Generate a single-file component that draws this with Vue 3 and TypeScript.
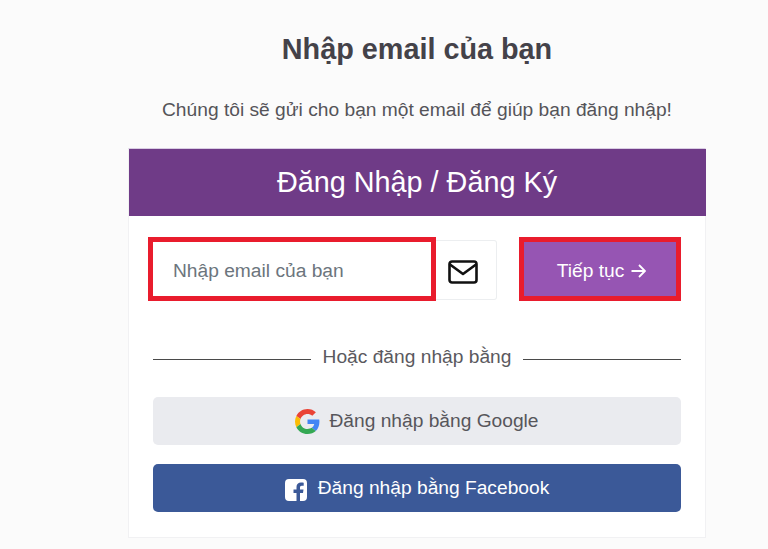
<script setup lang="ts">
const heading: string = 'Nhập email của bạn'
</script>

<template>
  <main class="page">
    <h1 class="title">{{ heading }}</h1>
    <p class="sub">Chúng tôi sẽ gửi cho bạn một email để giúp bạn đăng nhập!</p>
    <section class="card">
      <header class="head">Đăng Nhập / Đăng Ký</header>
      <div class="body">
        <form class="row" @submit.prevent>
          <div class="group">
            <input class="email" type="text" placeholder="Nhập email của bạn" />
            <span class="addon">
              <svg width="30" height="24" viewBox="0 0 30 24" fill="none" stroke="#111" stroke-width="2.600" stroke-linejoin="round">
                <rect x="1.500" y="1.500" width="27" height="21" rx="2.500" />
                <path d="M2 4.500l13 9.500L28 4.500" />
              </svg>
            </span>
          </div>
          <button class="next" type="submit">
            <span>Tiếp tục</span>
            <svg width="15" height="14" viewBox="0 0 15 14" fill="none" stroke="#fff" stroke-width="1.800">
              <path d="M0.500 7H14M8 1l6 6-6 6" />
            </svg>
          </button>
        </form>
        <div class="divider">
          <span class="line"></span>
          <span class="or">Hoặc đăng nhập bằng</span>
          <span class="line"></span>
        </div>
        <button class="social google" type="button">
          <svg width="25" height="25" viewBox="0 0 48 48">
            <path fill="#EA4335" d="M24 9.500c3.500 0 6.700 1.200 9.200 3.600l6.900-6.900C35.900 2.400 30.500 0 24 0 14.600 0 6.500 5.400 2.600 13.200l8 6.200C12.500 13.700 17.800 9.500 24 9.500z" />
            <path fill="#4285F4" d="M46.900 24.500c0-1.600-.1-3.100-.4-4.500H24v9h12.900c-.6 3-2.200 5.500-4.700 7.200l7.700 6c4.500-4.200 7-10.300 7-17.700z" />
            <path fill="#FBBC05" d="M10.500 28.600c-.5-1.500-.8-3-.8-4.600s.3-3.100.8-4.600l-8-6.200C.9 16.500 0 20.100 0 24s.9 7.500 2.600 10.800l7.900-6.200z" />
            <path fill="#34A853" d="M24 48c6.500 0 11.900-2.100 15.900-5.800l-7.700-6c-2.200 1.400-4.900 2.300-8.200 2.300-6.200 0-11.500-4.200-13.400-9.900l-8 6.200C6.500 42.600 14.600 48 24 48z" />
          </svg>
          <span>Đăng nhập bằng Google</span>
        </button>
        <button class="social facebook" type="button">
          <svg class="fb-icon" width="22" height="22" viewBox="0 0 22 22">
            <path fill="#fff" d="M4 0h14a4 4 0 0 1 4 4v14a4 4 0 0 1-4 4h-3v-8h3l.5-3.500H15V8.500c0-1 .5-1.700 1.800-1.700h1.900V3.700c-.6-.1-1.600-.2-2.700-.2-2.700 0-4.500 1.600-4.500 4.600v2.400H8.500V14h3v8H4a4 4 0 0 1-4-4V4a4 4 0 0 1 4-4z" />
          </svg>
          <span class="fb-text">Đăng nhập bằng Facebook</span>
        </button>
      </div>
    </section>
  </main>
</template>

<style scoped>
.page {
  width: 578px;
  margin-left: 128px;
  height: 549px;
  overflow: hidden;
  font-family: "Liberation Sans", Arial, sans-serif;
  color: #4a4a4f;
}
.title {
  margin: 0;
  padding-top: 31px;
  font-size: 28.800px;
  line-height: 36px;
  font-weight: 700;
  text-align: center;
  color: #444249;
}
.sub {
  margin: 0;
  padding-top: 30px;
  font-size: 19.200px;
  line-height: 26px;
  text-align: center;
  color: #555459;
}
.card {
  margin-top: 25px;
  height: 390px;
  box-sizing: border-box;
  background: #fff;
  border: 1px solid #f1f1f3;
  border-top-color: #d9cde3;
}
.head {
  height: 67px;
  margin: 0 -0.500px;
  background: #6f3b87;
  color: #fff;
  font-size: 28.800px;
  line-height: 66px;
  text-align: center;
}
.body {
  padding: 21px 24px 0;
}
.row {
  display: flex;
  align-items: center;
  justify-content: space-between;
  margin-left: -5px;
}
.group {
  display: flex;
  align-items: flex-end;
}
.email {
  width: 288px;
  height: 64px;
  box-sizing: border-box;
  padding: 3px 20px 0;
  border: 5px solid #e91c2d;
  outline: none;
  background: #fff;
  font: 19.200px "Liberation Sans", Arial, sans-serif;
  color: #495057;
}
.email::placeholder {
  color: #6c757d;
  opacity: 1;
}
.addon {
  display: flex;
  align-items: center;
  justify-content: center;
  width: 61px;
  height: 60px;
  box-sizing: border-box;
  margin-bottom: 1px;
  padding: 4px 7px 0 0;
  border: 1px solid #eceef0;
  border-left: none;
  border-radius: 0 3px 3px 0;
  background: #fff;
}
.next {
  display: flex;
  align-items: center;
  justify-content: center;
  gap: 7px;
  width: 162px;
  height: 64px;
  box-sizing: border-box;
  padding: 3px 0 0 3px;
  border: 5px solid #e91c2d;
  background: #9655b3;
  color: #fff;
  font: 19.200px "Liberation Sans", Arial, sans-serif;
}
.divider {
  display: flex;
  align-items: center;
  gap: 12px;
  margin-top: 45px;
  height: 26px;
}
.line {
  flex: 1;
  height: 1px;
  background: #4a4a4a;
}
.or {
  font-size: 19.200px;
  color: #5a595e;
  transform: translateY(-2px);
}
.social {
  display: flex;
  align-items: center;
  justify-content: center;
  gap: 9px;
  width: 100%;
  height: 48px;
  border: none;
  border-radius: 5px;
  font: 19.200px "Liberation Sans", Arial, sans-serif;
}
.google {
  margin-top: 25px;
  background: #eaebef;
  color: #57565b;
}
.facebook {
  margin-top: 19px;
  background: #3b5998;
  color: #fff;
  gap: 11px;
}
.fb-icon {
  margin-top: 4px;
}
.fb-text {
  margin-top: -1px;
}
</style>

<style>
html,
body {
  background: #fbfbfb;
}
</style>
